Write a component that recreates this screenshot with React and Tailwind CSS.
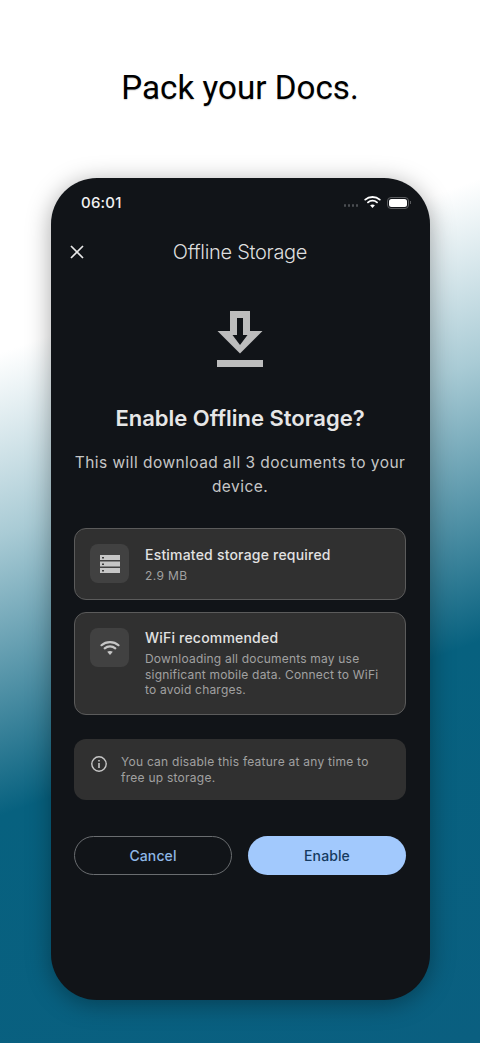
import React from "react";

function Wifi({ className }) {
  return (
    <svg viewBox="0 0 20 16" className={className} fill="none" stroke="currentColor" strokeLinecap="round">
      <path d="M1.5 5.2C6.2 1 13.8 1 18.5 5.2" strokeWidth="2.2" />
      <path d="M4.7 8.4C7.7 5.8 12.3 5.8 15.3 8.4" strokeWidth="2.2" />
      <path d="M10 15L7.2 11.8C8.8 10.6 11.2 10.6 12.8 11.8Z" fill="currentColor" stroke="none" />
    </svg>
  );
}

function Tile({ children }) {
  return (
    <div className="flex h-[39px] w-[39px] shrink-0 items-center justify-center rounded-lg bg-[#414141]">{children}</div>
  );
}

export default function App() {
  return (
    <div className="flex h-[1043px] w-[480px] flex-col items-center overflow-hidden bg-[linear-gradient(160deg,#ffffff_29%,#a9cbd5_44%,#07617f_67%,#0a5f80_100%)] font-['Inter',sans-serif]">
      <h1 className="mt-[68px] h-[40px] text-[33.2px] leading-[40px] font-normal text-black font-['Roboto',sans-serif] [text-shadow:0_1px_1px_rgba(0,0,0,0.18)]">
        Pack your Docs.
      </h1>
      <div className="mt-[70px] flex h-[822px] w-[379px] flex-col rounded-[46px] bg-[#111418] px-[23.5px] shadow-[0_4px_24px_rgba(0,0,0,0.35)]">
        <div className="flex h-[48px] items-center justify-between pt-[2px]">
          <span className="ml-[7px] text-[15px] font-medium tracking-[0.2px] text-[#f1f1f1]">06:01</span>
          <div className="mr-[-5px] mt-[-1px] flex items-center gap-[6px]">
            <div className="mt-[6px] flex gap-[1.5px]">
              <i className="h-[2.5px] w-[2.5px] rounded-full bg-[#4b4e52]" />
              <i className="h-[2.5px] w-[2.5px] rounded-full bg-[#4b4e52]" />
              <i className="h-[2.5px] w-[2.5px] rounded-full bg-[#4b4e52]" />
              <i className="h-[2.5px] w-[2.5px] rounded-full bg-[#4b4e52]" />
            </div>
            <Wifi className="mt-[-1px] h-[14px] w-[17px] text-white" />
            <div className="flex items-center">
              <div className="flex h-[12px] w-[22px] items-center justify-center rounded-[4px] border border-[#5a5c5f] p-[1px]">
                <div className="h-full w-full rounded-[2.5px] bg-white" />
              </div>
              <i className="ml-[1px] h-[3px] w-[1px] bg-[#5a5c5f]" />
            </div>
          </div>
        </div>

        <div className="relative flex h-[50px] items-center justify-center pt-[1px]">
          <svg viewBox="0 0 14 14" className="absolute left-[-4px] h-[14px] w-[14px] text-[#e8e8e8]" fill="none" stroke="currentColor" strokeWidth="1.7">
            <path d="M1 1L13 13M13 1L1 13" />
          </svg>
          <span className="text-[20px] font-light tracking-[-0.3px] text-[#dedede]">Offline Storage</span>
        </div>

        <div className="mt-[35px] flex justify-center">
          <svg viewBox="0 0 46 56" className="h-[56px] w-[46px]">
            <path d="M13 0H33V20H45.5L23 42.5L0.5 20H13Z" fill="#bdbdbd" />
            <path d="M20 7H26V24H30.5L23 34L15.5 24H20Z" fill="#111418" />
            <rect x="0" y="49" width="46" height="7" fill="#bdbdbd" />
          </svg>
        </div>

        <h2 className="mt-[37px] text-center text-[22px] leading-[28px] font-semibold tracking-[0px] text-[#e6e6e6]">
          Enable Offline Storage?
        </h2>
        <p className="mt-[19px] text-center text-[15.5px] leading-[24px] tracking-[0.45px] text-[#c6c6c6]">
          This will download all 3 documents to your device.
        </p>

        <div className="mt-[29px] flex h-[72px] items-start gap-[15px] rounded-xl border border-[#5b5b5b] bg-[#303030] pt-[15px] pl-[15px]">
          <Tile>
            <svg viewBox="0 0 20 18" className="h-[18px] w-[20px]">
              <path d="M0 0H20V5H0ZM0 6.5H20V11.5H0ZM0 13H20V18H0Z" fill="#c6c6c6" />
              <path d="M2 2H4V3.5H2ZM2 8.5H4V10H2ZM2 15H4V16.5H2Z" fill="#3d3d3d" />
            </svg>
          </Tile>
          <div className="mt-[1px] ml-[1px]">
            <div className="text-[14px] leading-[20px] font-medium tracking-[0.2px] text-[#e2e2e2]">Estimated storage required</div>
            <div className="mt-[1px] text-[12px] leading-[20px] tracking-[0.4px] text-[#a1a1a1]">2.9 MB</div>
          </div>
        </div>

        <div className="mt-[12px] flex h-[103px] items-start gap-[15px] rounded-xl border border-[#5b5b5b] bg-[#303030] pt-[15px] pl-[15px]">
          <Tile>
            <Wifi className="h-[16px] w-[20px] text-[#c6c6c6]" />
          </Tile>
          <div className="ml-[1px]">
            <div className="text-[14px] leading-[20px] font-medium tracking-[0.2px] text-[#e2e2e2]">WiFi recommended</div>
            <div className="mt-[3px] w-[240px] text-[12px] leading-[15.5px] tracking-[0.2px] text-[#a1a1a1]">
              Downloading all documents may use significant mobile data. Connect to WiFi to avoid charges.
            </div>
          </div>
        </div>

        <div className="mt-[24px] flex h-[61px] items-start gap-[14px] rounded-xl bg-[#303030] pt-[15px] pl-[17px]">
          <svg viewBox="0 0 16 16" className="mt-[2px] h-[16px] w-[16px] shrink-0 text-[#c6c6c6]" fill="none" stroke="currentColor" strokeWidth="1.4">
            <circle cx="8" cy="8" r="7.2" />
            <path d="M8 7V12" strokeWidth="1.6" />
            <path d="M8 4V5.6" strokeWidth="1.6" />
          </svg>
          <div className="w-[255px] text-[12px] leading-[15.5px] tracking-[0.25px] text-[#a1a1a1]">
            You can disable this feature at any time to free up storage.
          </div>
        </div>

        <div className="mt-[36px] grid grid-cols-2 gap-[16px]">
          <button className="h-[39px] rounded-full border border-[#6a6d70] text-[14px] font-medium tracking-[0.1px] text-[#8fb8e6]">Cancel</button>
          <button className="h-[39px] rounded-full bg-[#a2c9fd] text-[14px] font-medium tracking-[0.1px] text-[#153a60]">Enable</button>
        </div>
      </div>
    </div>
  );
}
